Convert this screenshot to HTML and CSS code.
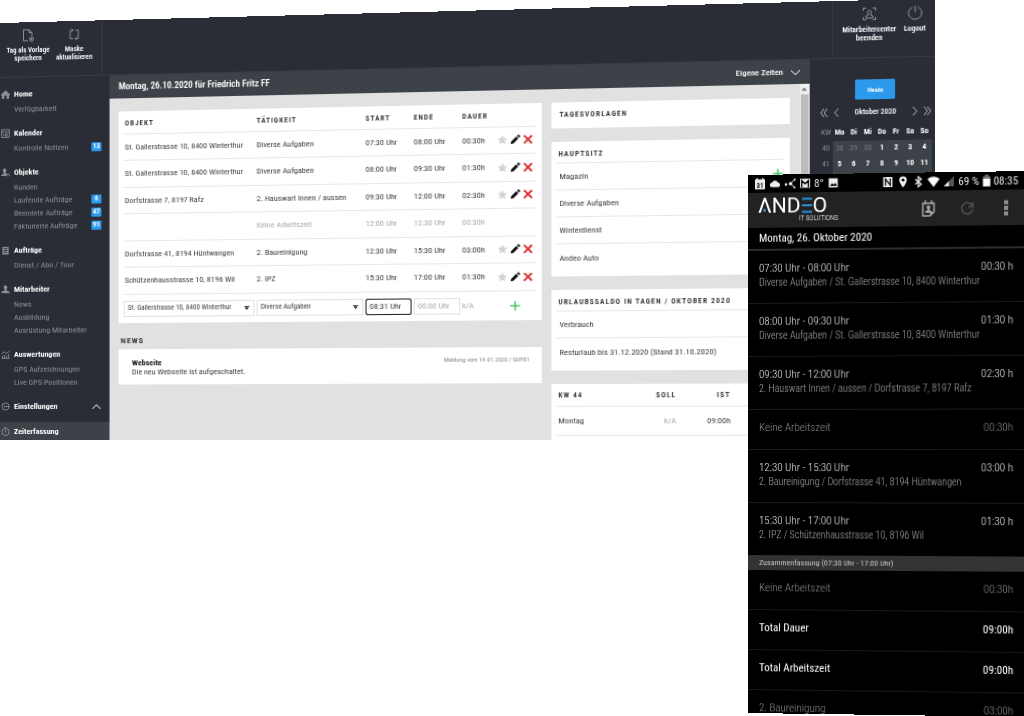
FILE: index.html
```
<!DOCTYPE html>
<html lang="de">
<head>
<meta charset="utf-8">
<title>Andeo Zeiterfassung</title>
<link rel="stylesheet" href="styles.css">
</head>
<body>
<svg class="defs" aria-hidden="true">
  <symbol id="star" viewBox="0 0 12 12"><path d="M6 .5l1.700 3.600 3.900.5-2.900 2.700.8 3.900L6 9.300l-3.500 1.900.8-3.900L.4 4.600l3.900-.5z" fill="#d3d3d3"/></symbol>
  <symbol id="pencil" viewBox="0 0 12 12"><path d="M.8 11.200l.8-3.200 5.600-5.600 2.400 2.400L4 10.400zM8 1.700l1.100-1.100q.6-.5 1.200 0l1.100 1.100q.5.600 0 1.200L10.300 4z" fill="#111"/></symbol>
  <symbol id="cross" viewBox="0 0 12 12"><path d="M1.500 1.500l9 9M10.500 1.500l-9 9" stroke="#e03438" stroke-width="2.200" fill="none"/></symbol>
  <symbol id="plus" viewBox="0 0 12 12"><path d="M6 .5v11M.5 6h11" stroke="#4cc764" stroke-width="1.800" fill="none"/></symbol>
</svg>

<main class="stage">
<section class="desktop">
  <header class="topbar">
    <div class="tools tools-left">
      <button type="button"><svg viewBox="0 0 14 14"><path d="M7 12.500H2.500V1.500H8l3 3V8M8 1.500v3h3"/><circle cx="10.500" cy="11" r="2"/><path d="M10.500 10v2M9.500 11h2"/></svg>Tag als Vorlage<br>speichern</button>
      <button type="button"><svg viewBox="0 0 14 14"><path d="M5.500 3H3v8.500h3M8.500 11.500H11V3H8M4.500 1.500L6 3 4.500 4.500M9.500 10L8 11.500 9.500 13"/></svg>Maske<br>aktualisieren</button>
    </div>
    <div class="tools tools-right">
      <button type="button"><svg viewBox="0 0 14 14"><path d="M1.500 4V1.500H4M10 1.500h2.500V4M12.500 10v2.500H10M4 12.500H1.500V10M4 11V9l2-1V7Q5 6 5.500 4.500 7 2.500 8.500 4.500 9 6 8 7v1l2 1v2z"/></svg>Mitarbeitercenter<br>beenden</button>
      <button type="button"><svg viewBox="0 0 14 14"><path d="M4.500 1.700a6 6 0 1 0 5 0M7 .5v6"/></svg>Logout</button>
    </div>
  </header>

  <div class="body">
    <nav class="sidebar">
      <section>
        <h2><svg viewBox="0 0 10 10"><path class="solid" d="M0 5l5-4.500L10 5v1H9v4H6.300V6.500H3.700V10H1V6H0z"/></svg>Home</h2>
        <a href="#">Verfügbarkeit</a>
      </section>
      <section>
        <h2><svg viewBox="0 0 10 10"><path d="M.7 1h8.600v8.500H.7zM.7 3.500h8.600M3 5.500v2.500M5 5.500h1.800v2.500H5z"/></svg>Kalender</h2>
        <a href="#">Kontrolle Notizen<span class="badge">13</span></a>
      </section>
      <section>
        <h2><svg viewBox="0 0 10 10"><path class="solid" d="M4 .5c1.600 0 2.200 1.200 2 2.500-.1.900-.6 1.400-.9 1.800v1L6.500 6.500V9H0V8l3-1.500v-1C2.300 4.700 2 3.500 2.200 2.300 2.400 1.200 3 .5 4 .5z"/><path d="M6.500 9.500V7.500L8 6.500l1.500 1v2"/></svg>Objekte</h2>
        <a href="#">Kunden</a>
        <a href="#">Laufende Aufträge<span class="badge">6</span></a>
        <a href="#">Beendete Aufträge<span class="badge">47</span></a>
        <a href="#">Fakturierte Aufträge<span class="badge">91</span></a>
      </section>
      <section>
        <h2><svg viewBox="0 0 10 10"><path class="solid" d="M1.500 1h7v8.500h-7z"/><path class="dark" d="M3 3h4M3 5h4M3 7h4"/></svg>Aufträge</h2>
        <a href="#">Dienst / Abo / Tour</a>
      </section>
      <section>
        <h2><svg viewBox="0 0 10 10"><path class="solid" d="M5 .5c1.700 0 2.200 1.200 2 2.500-.1.900-.5 1.400-.9 1.800v1.200L9.500 7.500v1.700h-9V7.500L3.900 6V4.800C3.400 4.200 3 3.500 3 2.500 3 1.200 3.600.5 5 .5z"/></svg>Mitarbeiter</h2>
        <a href="#">News</a>
        <a href="#">Ausbildung</a>
        <a href="#">Ausrüstung Mitarbeiter</a>
      </section>
      <section>
        <h2><svg viewBox="0 0 10 10"><path d="M.5 9.300h9M1.700 9V6.500M4 9V5.500M6.300 9V6.500M8.500 9V4.500M.5 4.500L3.500 2l2.500 2L9.500 1"/></svg>Auswertungen</h2>
        <a href="#">GPS Aufzeichnungen</a>
        <a href="#">Live GPS-Positionen</a>
      </section>
      <section>
        <h2><svg viewBox="0 0 10 10"><circle cx="5" cy="5" r="4"/><path d="M3 3.500L5 5h4M3 6.500L5 5"/></svg>Einstellungen<svg class="chev" viewBox="0 0 10 6"><path d="M1 5l4-4 4 4"/></svg></h2>
      </section>
      <h2 class="active"><svg viewBox="0 0 10 10"><circle cx="5" cy="5.500" r="4"/><path d="M5 3v3M4 .5h2"/></svg>Zeiterfassung</h2>
    </nav>

    <div class="center">
      <div class="titlebar">
        <h1>Montag, 26.10.2020 für Friedrich Fritz FF</h1>
        <button type="button">Eigene Zeiten<svg viewBox="0 0 10 6"><path d="M1 1l4 4 4-4"/></svg></button>
      </div>
      <div class="scroller">
        <div class="content">
          <div class="col-main">
            <div class="card">
              <table class="times">
                <thead><tr><th class="c-obj">Objekt</th><th class="c-task">Tätigkeit</th><th class="c-time">Start</th><th class="c-time">Ende</th><th class="c-dur">Dauer</th><th></th></tr></thead>
                <tbody>
                  <tr><td>St. Gallerstrasse 10, 8400 Winterthur</td><td>Diverse Aufgaben</td><td>07:30 Uhr</td><td>08:00 Uhr</td><td>00:30h</td><td><span class="acts"><button type="button" aria-label="Favorit"><svg><use href="#star"/></svg></button><button type="button" aria-label="Bearbeiten"><svg><use href="#pencil"/></svg></button><button type="button" aria-label="Löschen"><svg><use href="#cross"/></svg></button></span></td></tr>
                  <tr><td>St. Gallerstrasse 10, 8400 Winterthur</td><td>Diverse Aufgaben</td><td>08:00 Uhr</td><td>09:30 Uhr</td><td>01:30h</td><td><span class="acts"><button type="button" aria-label="Favorit"><svg><use href="#star"/></svg></button><button type="button" aria-label="Bearbeiten"><svg><use href="#pencil"/></svg></button><button type="button" aria-label="Löschen"><svg><use href="#cross"/></svg></button></span></td></tr>
                  <tr><td>Dorfstrasse 7, 8197 Rafz</td><td>2. Hauswart Innen / aussen</td><td>09:30 Uhr</td><td>12:00 Uhr</td><td>02:30h</td><td><span class="acts"><button type="button" aria-label="Favorit"><svg><use href="#star"/></svg></button><button type="button" aria-label="Bearbeiten"><svg><use href="#pencil"/></svg></button><button type="button" aria-label="Löschen"><svg><use href="#cross"/></svg></button></span></td></tr>
                  <tr class="muted"><td></td><td>Keine Arbeitszeit</td><td>12:00 Uhr</td><td>12:30 Uhr</td><td>00:30h</td><td></td></tr>
                  <tr><td>Dorfstrasse 41, 8194 Hüntwangen</td><td>2. Baureinigung</td><td>12:30 Uhr</td><td>15:30 Uhr</td><td>03:00h</td><td><span class="acts"><button type="button" aria-label="Favorit"><svg><use href="#star"/></svg></button><button type="button" aria-label="Bearbeiten"><svg><use href="#pencil"/></svg></button><button type="button" aria-label="Löschen"><svg><use href="#cross"/></svg></button></span></td></tr>
                  <tr><td>Schützenhausstrasse 10, 8196 Wil</td><td>2. IPZ</td><td>15:30 Uhr</td><td>17:00 Uhr</td><td>01:30h</td><td><span class="acts"><button type="button" aria-label="Favorit"><svg><use href="#star"/></svg></button><button type="button" aria-label="Bearbeiten"><svg><use href="#pencil"/></svg></button><button type="button" aria-label="Löschen"><svg><use href="#cross"/></svg></button></span></td></tr>
                  <tr class="entry">
                    <td><select aria-label="Objekt"><option>St. Gallerstrasse 10, 8400 Winterthur</option></select></td>
                    <td><select aria-label="Tätigkeit"><option>Diverse Aufgaben</option></select></td>
                    <td><input class="focus" type="text" aria-label="Start" value="08:31 Uhr"></td>
                    <td><input type="text" aria-label="Ende" placeholder="00:00 Uhr"></td>
                    <td class="na">k/A</td>
                    <td><span class="acts add"><button type="button" aria-label="Hinzufügen"><svg><use href="#plus"/></svg></button></span></td>
                  </tr>
                </tbody>
              </table>
            </div>
            <h2 class="section-title">News</h2>
            <article class="card news">
              <div><h3>Webseite</h3><p>Die neu Webseite ist aufgeschaltet.</p></div>
              <small>Meldung vom 14.01.2020 / SUP01</small>
            </article>
          </div>
          <aside class="col-side">
            <div class="card bare"><h3>Tagesvorlagen</h3></div>
            <div class="card list">
              <h3>Hauptsitz</h3>
              <ul><li>Magazin<button type="button" aria-label="Hinzufügen"><svg><use href="#plus"/></svg></button></li><li>Diverse Aufgaben</li><li>Winterdienst</li><li>Andeo Auto</li></ul>
            </div>
            <div class="card list">
              <h3>Urlaubssaldo in Tagen / Oktober 2020</h3>
              <ul><li>Verbrauch</li><li>Resturlaub bis 31.12.2020 (Stand 31.10.2020)</li></ul>
            </div>
            <div class="card list">
              <table class="week">
                <thead><tr><th>KW 44</th><th>Soll</th><th>Ist</th><th></th></tr></thead>
                <tbody><tr><td>Montag</td><td class="na">k/A</td><td>09:00h</td><td></td></tr><tr><td></td><td></td><td></td><td></td></tr></tbody>
              </table>
            </div>
          </aside>
        </div>
        <div class="scrollbar"><svg viewBox="0 0 8 10"><path d="M4 3.500L6.500 6.500h-5z"/></svg><div class="thumb"></div></div>
      </div>
    </div>

    <aside class="calendar">
      <button type="button" class="today">Heute</button>
      <div class="month">
        <button type="button" aria-label="Vorjahr"><svg viewBox="0 0 8 10"><path d="M4 1L1 5l3 4M7 1L4 5l3 4"/></svg></button>
        <button type="button" aria-label="Vormonat"><svg viewBox="0 0 8 10"><path d="M6 1L2.500 5 6 9"/></svg></button>
        <span>Oktober 2020</span>
        <button type="button" aria-label="Folgemonat"><svg viewBox="0 0 8 10"><path d="M2 1l3.500 4L2 9"/></svg></button>
        <button type="button" aria-label="Folgejahr"><svg viewBox="0 0 8 10"><path d="M1 1l3 4-3 4M4 1l3 4-3 4"/></svg></button>
      </div>
      <table>
        <thead><tr><th class="kw">KW</th><th>Mo</th><th>Di</th><th>Mi</th><th>Do</th><th>Fr</th><th>Sa</th><th>So</th></tr></thead>
        <tbody>
          <tr><th class="kw">40</th><td class="out">28</td><td class="out">29</td><td class="out">30</td><td>1</td><td>2</td><td>3</td><td>4</td></tr>
          <tr><th class="kw">41</th><td>5</td><td>6</td><td>7</td><td>8</td><td>9</td><td>10</td><td>11</td></tr>
          <tr><th class="kw"></th><td></td><td></td><td></td><td></td><td></td><td></td><td></td></tr>
        </tbody>
      </table>
    </aside>
  </div>
</section>

<section class="phone">
  <div class="status">
    <svg viewBox="0 0 12 12"><path d="M1 1.500h1.500V.3h1.300v1.200h4.400V.3h1.300v1.200H11v10H1z" fill="#eee"/><text x="6" y="9.800" text-anchor="middle" class="day">31</text></svg>
    <svg viewBox="0 0 12 12"><path d="M3 9.500a2.200 2.200 0 0 1 0-4.400A3.200 3.200 0 0 1 9 5a2.300 2.300 0 0 1 .5 4.500z" fill="#eee"/></svg>
    <svg viewBox="0 0 12 12"><path d="M11 2L6.500 6.200 10.500 10" stroke="#ddd" fill="none"/><circle cx="6.500" cy="6.200" r="1.700" fill="#eee"/><circle cx="10.700" cy="2.200" r="1" fill="#eee"/><circle cx="10.300" cy="10" r="1" fill="#eee"/><circle cx="2" cy="7" r="1.300" fill="#eee"/></svg>
    <svg viewBox="0 0 12 12"><path d="M1 1.500h10v9H1z" fill="#eee"/><path d="M2.700 10V3.500L6 6.500l3.300-3V10" stroke="#000" stroke-width="1.300" fill="none"/></svg>
    <span>8°</span>
    <svg viewBox="0 0 12 12"><path d="M1.500 1.500h9v9h-9z" fill="#eee"/><path d="M2.800 9L5 6.200l1.500 1.700L8 6l1.700 3z" fill="#000"/></svg>
    <span class="push"></span>
    <svg viewBox="0 0 12 12"><path d="M1.500 1h9v10h-9z" fill="#eee"/><path d="M3.700 9.500v-6.500l4.600 6V2.500" stroke="#000" stroke-width="1.200" fill="none"/></svg>
    <svg viewBox="0 0 12 12"><path d="M6 .5a3.700 3.700 0 0 1 3.700 3.700C9.700 7 6 11.500 6 11.500S2.300 7 2.300 4.200A3.700 3.700 0 0 1 6 .5z" fill="#eee"/><circle cx="6" cy="4.200" r="1.400" fill="#000"/></svg>
    <svg viewBox="0 0 12 12"><path d="M3 3.500l6 5L6 11V1l3 2.500-6 5" stroke="#eee" stroke-width="1.200" fill="none"/></svg>
    <svg viewBox="0 0 12 12"><path d="M6 11.500L0 3.500q6-4.500 12 0z" fill="#fff"/></svg>
    <svg viewBox="0 0 12 12"><path d="M11 1v10H1z" fill="#555"/><path d="M6 6v5H1z" fill="#eee"/></svg>
    <span>69 %</span>
    <svg class="batt" viewBox="0 0 8 12"><path d="M2.500 0h3v1.500H7.500v10h-7v-10h2z" fill="#777"/><path d="M.5 4h7v7.500h-7z" fill="#fff"/></svg>
    <span>08:35</span>
  </div>
  <div class="appbar">
    <div class="logo">
      <div class="word">Λ<i class="dot"></i>ND<svg class="bars" viewBox="0 0 12 16"><path d="M1 1.500h10M1 8h10M1 14.500h10"/></svg>O</div>
      <div class="sub">IT SOLUTIONS</div>
    </div>
    <button type="button" aria-label="Kalender"><svg viewBox="0 0 16 18"><path d="M2.500 3.500h11v8.500l-4 4h-7z" fill="none" stroke="#a8a8a8" stroke-width="1.500"/><path d="M13.500 12h-4v4z" fill="#a8a8a8"/><path d="M5 .5v4M11 .5v4" stroke="#a8a8a8" stroke-width="1.600"/><path d="M8 5.500c1.500 0 2 1.200 1.700 2.400-.2.700-.5 1-.7 1.300v1l2 1V13H5v-1.800l2-1v-1C6.500 8.700 6.200 8 6.200 7.300 6.200 6.200 6.800 5.500 8 5.500z" fill="#a8a8a8"/></svg></button>
    <button type="button" aria-label="Aktualisieren"><svg viewBox="0 0 16 18"><path d="M13 6.500A5.500 5.500 0 1 0 13.500 10M13.500 3v4.500H9" fill="none" stroke="#4c4c4c" stroke-width="1.700"/></svg></button>
    <button type="button" aria-label="Menü"><svg viewBox="0 0 16 18"><path d="M6 1.500h4v4H6zM6 7h4v4H6zM6 12.500h4v4H6z" fill="#909090"/></svg></button>
  </div>
  <h2 class="date">Montag, 26. Oktober 2020</h2>
  <ul class="entries">
    <li><div><b>07:30 Uhr - 08:00 Uhr</b><span>Diverse Aufgaben / St. Gallerstrasse 10, 8400 Winterthur</span></div><time>00:30 h</time></li>
    <li><div><b>08:00 Uhr - 09:30 Uhr</b><span>Diverse Aufgaben / St. Gallerstrasse 10, 8400 Winterthur</span></div><time>01:30 h</time></li>
    <li><div><b>09:30 Uhr - 12:00 Uhr</b><span>2. Hauswart Innen / aussen / Dorfstrasse 7, 8197 Rafz</span></div><time>02:30 h</time></li>
    <li class="single dim"><div>Keine Arbeitszeit</div><time>00:30h</time></li>
    <li><div><b>12:30 Uhr - 15:30 Uhr</b><span>2. Baureinigung / Dorfstrasse 41, 8194 Hüntwangen</span></div><time>03:00 h</time></li>
    <li><div><b>15:30 Uhr - 17:00 Uhr</b><span>2. IPZ / Schützenhausstrasse 10, 8196 Wil</span></div><time>01:30 h</time></li>
  </ul>
  <h3 class="summary">Zusammenfassung (07:30 Uhr - 17:00 Uhr)</h3>
  <ul class="entries">
    <li class="single dim"><div>Keine Arbeitszeit</div><time>00:30h</time></li>
    <li class="single strong"><div>Total Dauer</div><time>09:00h</time></li>
    <li class="single strong"><div>Total Arbeitszeit</div><time>09:00h</time></li>
    <li class="single dim"><div>2. Baureinigung</div><time>03:00h</time></li>
  </ul>
</section>
</main>
</body>
</html>
```
FILE: styles.css
```
* { box-sizing: border-box; }
body { margin: 0; background: #fff; font: 8px/13px "Roboto Condensed", Roboto, sans-serif; color: #3c3c3c; }
h1, h2, h3, p, ul { margin: 0; padding: 0; }
ul { list-style: none; }
a { color: inherit; text-decoration: none; }
button { border: 0; padding: 0; background: none; color: inherit; font: inherit; cursor: pointer; }
svg { fill: none; stroke: #8b8f94; flex: none; }
.defs { position: absolute; width: 0; height: 0; }
.stage { position: relative; min-height: 100vh; padding-top: 23px; overflow: hidden; }

/* Desktop window, turned slightly towards the viewer on its right side */
.desktop { width: 86.4%; height: 417px; overflow: hidden; display: flex; flex-direction: column; background: #2a2d36; transform: perspective(1000px) rotateY(-3.6deg); transform-origin: left bottom; }
.topbar { height: 55px; display: flex; justify-content: space-between; border-bottom: 1px solid #363a42; flex: none; }
.tools { display: flex; align-items: flex-start; padding-top: 6px; color: #fff; font-size: 7px; line-height: 8px; font-weight: 600; }
.tools-left { border-right: 1px solid #363a42; padding-right: 5px; padding-left: 4px; }
.tools-right { border-left: 1px solid #363a42; padding-right: 6px; padding-left: 7px; gap: 3px; }
.tools button { display: flex; flex-direction: column; align-items: center; min-width: 24px; }
.tools-left button { width: 48px; text-align: center; }
.tools-left button + button { width: 44px; }
.tools-right button { width: 52px; }
.tools-right button + button { width: 24px; }
.tools svg { width: 14px; height: 14px; margin-bottom: 4px; stroke-width: 1; }
.body { flex: 1; min-height: 0; display: flex; }

.sidebar { width: 109px; flex: none; padding-top: 8px; color: #8b8f94; display: flex; flex-direction: column; }
.sidebar section { padding-bottom: 9px; }
.sidebar h2 { display: flex; align-items: center; height: 17px; font-size: 8px; color: #fff; }
.sidebar h2 svg { width: 9px; height: 9px; margin: 0 4px 0 1px; }
.sidebar h2 .chev { width: 10px; height: 6px; margin: 0 8px 0 auto; stroke: #fff; }
.sidebar .solid { fill: #8b8f94; stroke: none; }
.sidebar .dark { stroke: #2a2d36; }
.sidebar a { display: flex; align-items: center; justify-content: space-between; height: 13px; padding: 0 8px 0 14px; }
.badge { width: 10px; height: 9px; background: #2c99ea; color: #fff; font-size: 7px; line-height: 9px; text-align: center; font-weight: 700; border-radius: 1px; }
.sidebar .active { margin-top: -2px; height: 19px; background: #3c4248; flex: none; }

.center { flex: 1; min-width: 0; display: flex; flex-direction: column; background: #e1e1e1; }
.titlebar { display: flex; align-items: center; justify-content: space-between; height: 23px; padding: 0 8px 0 9px; background: #3c4248; color: #fff; flex: none; }
.titlebar h1 { font-size: 9px; font-weight: 600; }
.titlebar button { display: flex; align-items: center; gap: 6px; font-weight: 500; }
.titlebar svg { width: 10px; height: 6px; stroke: #fff; }
.scroller { flex: 1; min-height: 0; display: flex; }
.content { flex: 1; display: flex; gap: 9px; padding: 13px 9px 0; align-items: flex-start; }
.col-main { flex: 407; min-width: 0; }
.col-side { flex: 219; min-width: 0; display: flex; flex-direction: column; gap: 13px; }
.card { background: #fff; padding: 0 5px; }
.scrollbar { width: 9px; background: #efefef; display: flex; flex-direction: column; }
.scrollbar svg { width: 8px; height: 10px; fill: #777; stroke: none; }
.thumb { flex: 1; margin: 0 1px; background: #bdbdbd; }

table { border-collapse: collapse; width: 100%; }
th, td { padding: 0; text-align: left; font-weight: 400; }
.times { table-layout: fixed; }
.times th, .week th, .list h3, .bare h3 { font-size: 7px; font-weight: 700; letter-spacing: 1px; text-transform: uppercase; }
.times th { height: 22px; padding-top: 4px; }
.times td { height: 26px; }
.times tr:nth-child(even) td { height: 27px; }
.times th, .times td { border-bottom: 1px solid #e8e8e8; }
.times th:first-child, .times td:first-child { padding-left: 1px; }
.times .c-obj { width: 130px; }
.times .c-task { width: 105px; }
.times .c-time { width: 46px; }
.times .c-dur { width: 34px; }
.times .muted td, .times .na, .week .na { color: #aaa; }
.times .entry td { height: 29px; border: 0; padding: 0; }
.acts { display: flex; justify-content: flex-end; gap: 2px; padding-right: 3px; }
.acts button, .acts svg { display: block; width: 10px; height: 10px; stroke: none; }
.acts.add { padding-right: 15px; }
select, input { appearance: none; display: block; width: calc(100% - 2px); height: 16px; margin: 0; padding: 0 3px; border: 1px solid #e2e2e2; border-radius: 0; background: #fff; font: inherit; color: #3c3c3c; outline: 0; }
select { font-size: 7px; background: linear-gradient(#555, #555) right 4px top 5px / 5px 1px no-repeat, linear-gradient(#555, #555) right 5px top 6px / 3px 2px no-repeat, linear-gradient(#555, #555) right 6px top 8px / 1px 1px no-repeat; }
input.focus { border: 1px solid #222; outline: 1px solid #222; outline-offset: -1px; border-radius: 2px; }
input::placeholder { color: #aaa; opacity: 1; }
.section-title { margin: 12px 0 2px 2px; font-size: 8px; line-height: 12px; letter-spacing: 1px; text-transform: uppercase; }
.news { display: flex; justify-content: space-between; padding: 9px 12px 8px 13px; line-height: 9px; min-height: 34px; }
.news h3 { font-size: 8px; color: #111; }
.news small { font-size: 6px; line-height: 6px; color: #888; }

.bare { height: 25px; padding: 6px 7px; }
.bare h3, .list h3 { line-height: 13px; }
.list { padding: 0 6px 4px 5px; }
.list h3 { padding: 6px 1px 1px; border-bottom: 1px solid #e8e8e8; }
.list li { display: flex; justify-content: space-between; align-items: center; height: 26px; padding-left: 2px; border-bottom: 1px solid #e8e8e8; }
.list li:last-child { height: 27px; border: 0; }
.list li button, .list li svg { display: block; width: 10px; height: 10px; }
.week th { height: 21px; padding-top: 3px; }
.week td { height: 28px; }
.week th, .week td { border-bottom: 1px solid #e8e8e8; width: 24%; text-align: right; }
.week th:first-child, .week td:first-child { text-align: left; padding-left: 1px; width: 29%; }

.calendar { width: 113px; flex: none; padding: 20px 3px 0 9px; display: flex; flex-direction: column; }
.today { align-self: center; width: 36px; height: 19px; background: #2c99ea; color: #fff; font-size: 6px; font-weight: 700; border-radius: 1px; }
.month { display: flex; align-items: center; gap: 3px; height: 24px; color: #fff; font-weight: 500; }
.month span { flex: 1; text-align: center; font-size: 7px; }
.month svg { display: block; width: 8px; height: 10px; stroke: #a5a8ac; }
.calendar table { table-layout: fixed; }
.calendar th, .calendar td { height: 15px; text-align: center; color: #fff; font-size: 7px; font-weight: 700; }
.calendar td { background: #3c4248; }
.calendar .kw { width: 12px; color: #8b8f94; font-weight: 400; }
.calendar .out { color: #777c82; font-weight: 400; }

/* Phone, in front of the desktop window */
.phone { position: absolute; top: 175px; right: 0; width: 26.95%; height: 538px; overflow: hidden; background: #000; color: #e4e4e4; transform: perspective(1000px) rotateY(-3deg); transform-origin: left center; font-size: 11px; font-weight: 300; }
.status { display: flex; align-items: center; gap: 3px; height: 18px; padding: 0 9px 0 6px; font-weight: 400; }
.status svg { width: 12px; height: 12px; stroke: none; }
.status .batt { width: 8px; }
.status .day { font-size: 7px; font-weight: 700; fill: #111; }
.push { flex: 1; }
.appbar { display: flex; align-items: center; height: 35px; padding: 0 13px 0 10px; gap: 22px; background: #222; }
.logo { flex: 1; color: #fff; }
.word { display: flex; align-items: center; position: relative; font: 400 21px/17px Roboto, sans-serif; }
.appbar .bars { width: 12px; height: 16px; stroke: #2d8fd6; stroke-width: 2; }
.dot { position: absolute; left: 5px; top: 11px; width: 3px; height: 3px; border-radius: 50%; background: #2d8fd6; }
.sub { padding-left: 41px; font-size: 7px; line-height: 9px; }
.appbar button, .appbar svg { display: block; width: 16px; height: 18px; }
.appbar button svg { stroke: none; }
.date { height: 23px; padding-left: 11px; border-bottom: 2px solid #2c2c2c; font-size: 11px; line-height: 22px; font-weight: 400; color: #fff; }
.entries li { display: flex; justify-content: space-between; padding: 10px 14px 0 11px; height: 53px; border-bottom: 1px solid #1c1c1c; line-height: 15px; }
.entries li:last-child { height: 52px; border: 0; }
.entries b, .entries span { display: block; font-weight: inherit; }
.entries span { font-size: 10px; line-height: 14px; color: #a8a8a8; }
.entries .single { height: 40px; }
.entries .dim { color: #8c8c8c; }
.entries .strong { color: #fff; font-weight: 400; }
.summary { background: #333; color: #c8c8c8; height: 15px; padding-left: 11px; font-size: 8px; line-height: 15px; font-weight: 400; }
```
